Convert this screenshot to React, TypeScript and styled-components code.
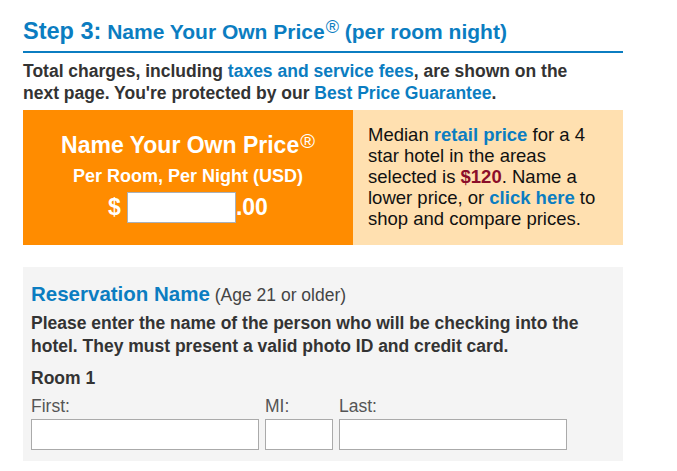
import styled, { createGlobalStyle } from "styled-components";

const GlobalStyle = createGlobalStyle`
  body {
    margin: 0;
    background: #fff;
    font-family: "Liberation Sans", Arial, sans-serif;
  }
`;

const Page = styled.div`
  width: 600px;
  padding: 17px 0 0 23px;
`;

const Heading = styled.h2`
  margin: 0;
  padding-bottom: 5px;
  border-bottom: 2px solid #0b7dc1;
  color: #0b7dc1;
  font-size: 21px;
  line-height: 28px;
  font-weight: bold;
`;

const StepLabel = styled.span`
  font-size: 23.5px;
`;

const Sup = styled.sup<{ $size: number; $top: number }>`
  font-size: ${(p) => p.$size}px;
  font-weight: normal;
  vertical-align: top;
  position: relative;
  top: ${(p) => p.$top}px;
  line-height: 1;
  margin-left: 1px;
`;

const Intro = styled.p`
  margin: 7px 0 0;
  max-width: 575px;
  color: #333;
  font-size: 17.5px;
  font-weight: bold;
  line-height: 22px;
`;

const Link = styled.a<{ $bold?: boolean }>`
  color: #0b7dc1;
  text-decoration: none;
  font-weight: ${(p) => (p.$bold ? "bold" : "inherit")};
`;

const PriceRow = styled.div`
  display: flex;
  margin-top: 6px;
  height: 135px;
`;

const OfferBox = styled.div`
  width: 330px;
  background: #ff8c00;
  color: #fff;
  text-align: center;
  font-weight: bold;
  padding-top: 22px;
  box-sizing: border-box;
`;

const OfferTitle = styled.div`
  font-size: 23px;
  line-height: 26px;
`;

const OfferSub = styled.div`
  font-size: 18px;
  line-height: 22px;
  margin-top: 7px;
`;

const AmountRow = styled.div`
  display: flex;
  justify-content: center;
  align-items: center;
  margin-top: 5px;
  font-size: 23px;
  line-height: 31px;
`;

const Dollar = styled.span`
  margin-right: 6px;
`;

const PriceInput = styled.input`
  width: 109px;
  height: 31px;
  box-sizing: border-box;
  border: 1px solid #a9b0b8;
  background: #fff;
  margin: 0;
  padding: 0;
`;

const RetailBox = styled.div`
  flex: 1;
  background: #ffe0b0;
  color: #111;
  font-size: 18.5px;
  line-height: 21px;
  padding: 14px 14px 0 15px;
`;

const RetailPrice = styled.span`
  color: #8b0e2a;
  font-weight: bold;
`;

const Panel = styled.div`
  margin-top: 22px;
  background: #f4f4f4;
  height: 194px;
  padding: 15px 8px 0;
  box-sizing: border-box;
  color: #333;
`;

const PanelTitle = styled.div`
  font-size: 17.5px;
  line-height: 24px;
  height: 24px;
`;

const PanelTitleStrong = styled.span`
  color: #0b7dc1;
  font-size: 20.5px;
  font-weight: bold;
`;

const PanelNote = styled.span`
  color: #444;
`;

const Instructions = styled.p`
  margin: 6px 0 0;
  font-size: 17.5px;
  font-weight: bold;
  line-height: 23px;
`;

const RoomLabel = styled.div`
  margin-top: 9px;
  font-size: 17.5px;
  font-weight: bold;
  line-height: 22px;
`;

const Fields = styled.div`
  display: flex;
  gap: 6px;
  margin-top: 8px;
`;

const Field = styled.label<{ $width: number }>`
  display: flex;
  flex-direction: column;
  width: ${(p) => p.$width}px;
  color: #555;
  font-size: 17.5px;
  line-height: 19px;
`;

const TextInput = styled.input`
  height: 31px;
  box-sizing: border-box;
  border: 1px solid #aaa;
  background: #fff;
  margin: 3px 0 0;
  padding: 0 4px;
`;

export default function App() {
  return (
    <>
      <GlobalStyle />
      <Page>
        <Heading>
          <StepLabel>Step 3:</StepLabel> Name Your Own Price
          <Sup $size={18} $top={1}>®</Sup> (per room night)
        </Heading>
        <Intro>
          Total charges, including <Link>taxes and service fees</Link>, are shown on the next
          page. You're protected by our <Link>Best Price Guarantee</Link>.
        </Intro>
        <PriceRow>
          <OfferBox>
            <OfferTitle>
              Name Your Own Price
              <Sup $size={20} $top={-1}>®</Sup>
            </OfferTitle>
            <OfferSub>Per Room, Per Night (USD)</OfferSub>
            <AmountRow>
              <Dollar>$</Dollar>
              <PriceInput type="text" />
              <span>.00</span>
            </AmountRow>
          </OfferBox>
          <RetailBox>
            Median <Link $bold>retail price</Link> for a 4 star hotel in the areas selected is{" "}
            <RetailPrice>$120</RetailPrice>. Name a lower price, or <Link $bold>click here</Link> to
            shop and compare prices.
          </RetailBox>
        </PriceRow>
        <Panel>
          <PanelTitle>
            <PanelTitleStrong>Reservation Name</PanelTitleStrong> <PanelNote>(Age 21 or older)</PanelNote>
          </PanelTitle>
          <Instructions>
            Please enter the name of the person who will be checking into the hotel. They must
            present a valid photo ID and credit card.
          </Instructions>
          <RoomLabel>Room 1</RoomLabel>
          <Fields>
            <Field $width={228}>
              First:
              <TextInput type="text" />
            </Field>
            <Field $width={68}>
              MI:
              <TextInput type="text" />
            </Field>
            <Field $width={228}>
              Last:
              <TextInput type="text" />
            </Field>
          </Fields>
        </Panel>
      </Page>
    </>
  );
}
